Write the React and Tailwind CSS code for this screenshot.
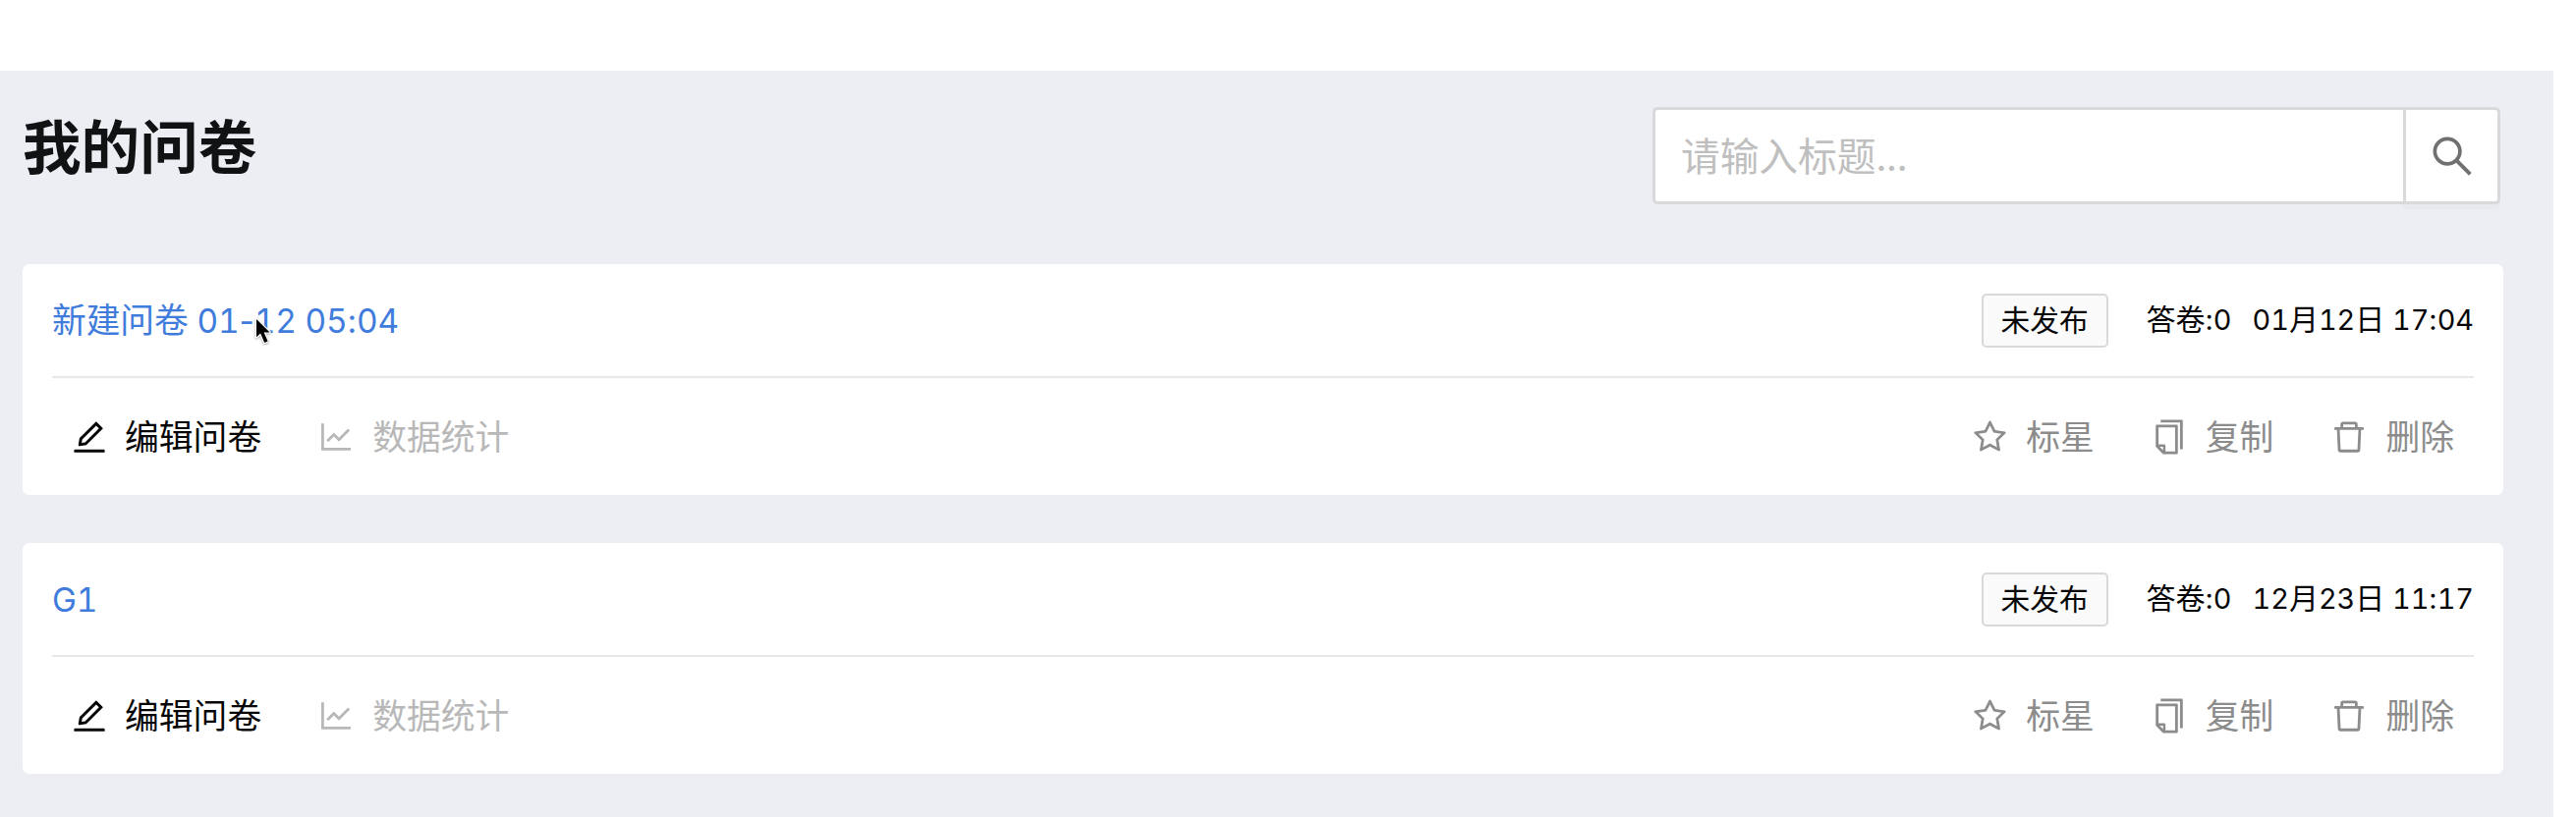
import React from 'react';
import {
  AiOutlineCopy,
  AiOutlineDelete,
  AiOutlineEdit,
  AiOutlineLineChart,
  AiOutlineSearch,
  AiOutlineStar,
} from 'react-icons/ai';

const surveys = [
  { id: 1, title: '新建问卷 01-12 05:04', status: '未发布', answers: 0, createdAt: '01月12日 17:04' },
  { id: 2, title: 'G1', status: '未发布', answers: 0, createdAt: '12月23日 11:17' },
];

// Latin runs are set slightly smaller than the Chinese text; digits keep a
// tabular width while separators keep their natural one.
function MixedText({ children }) {
  return children.split(/([\x20-\x7e]+)/).map((run, i) =>
    i % 2 ? (
      <span key={i} className="text-[0.96em]">
        {run.split(/([:-])/).map((part, j) =>
          j % 2 ? <span key={j} className="normal-nums">{part}</span> : part
        )}
      </span>
    ) : (
      run
    )
  );
}

function SurveyCard({ survey }) {
  return (
    <article className="flex h-[235px] w-[2525px] flex-col rounded-[7px] bg-white px-[30px]">
      <div className="flex h-[114px] items-center">
        <div className="flex-1">
          <a className="whitespace-pre text-[34.8px] leading-[50px] tracking-[-0.15px] text-[#3f7cdc]">
            <MixedText>{survey.title}</MixedText>
          </a>
        </div>
        <span className="mr-[39px] flex h-[55px] w-[129px] items-center justify-center rounded-[5px] border-2 border-[#d9d9d9] bg-[#fafafa] pt-px text-[29.7px] leading-none">
          {survey.status}
        </span>
        <span className="mr-[21px] whitespace-pre pb-px text-[30px] leading-none">
          <MixedText>{`答卷:${survey.answers}`}</MixedText>
        </span>
        <span className="whitespace-pre pb-px text-[30px] leading-none">
          <MixedText>{survey.createdAt}</MixedText>
        </span>
      </div>
      <div className="h-[2px] bg-[#e8e8e8]" />
      <div className="flex flex-1 items-center pt-px text-[34.8px] leading-none">
        <button className="ml-[18px] flex items-center gap-[16px]">
          <AiOutlineEdit className="size-[40px]" />
          编辑问卷
        </button>
        <button className="ml-[56px] flex items-center gap-[17px] text-[#b8b8b8]">
          <AiOutlineLineChart className="size-[40px]" />
          数据统计
        </button>
        <div className="ml-auto mr-[20px] flex items-center text-[#8c8c8c]">
          <button className="flex items-center gap-[17px]">
            <AiOutlineStar className="size-[39px]" />
            标星
          </button>
          <button className="ml-[56px] flex items-center gap-[17px]">
            <AiOutlineCopy className="size-[40px]" />
            复制
          </button>
          <button className="ml-[57px] flex items-center gap-[17px]">
            <AiOutlineDelete className="size-[40px]" />
            删除
          </button>
        </div>
      </div>
    </article>
  );
}

function Pointer() {
  return (
    <svg
      className="pointer-events-none absolute left-[257px] top-[321px] h-[34px] w-[24px] drop-shadow-[0_1px_1px_rgba(0,0,0,0.35)]"
      viewBox="-4 -4 24 34"
    >
      <path
        d="M0 0V18.2L4.1 14.6L8.2 24L11.6 22.5L7.6 13.4H13.6Z"
        fill="#000"
        stroke="#fff"
        strokeWidth="2.4"
        strokeLinejoin="round"
        paintOrder="stroke"
      />
    </svg>
  );
}

export default function App() {
  return (
    <div className="relative h-[832px] w-[2622px] overflow-hidden bg-white pt-[72px] font-['Inter','Noto_Sans_CJK_SC',sans-serif] text-[#050505] tabular-nums">
      <main className="h-[760px] w-[2599px] bg-[#edeef3] pl-[23px]">
        <header className="flex h-[197px] items-start pt-[37px]">
          <h1 className="mt-[11px] text-[59.6px] font-bold leading-[60px] text-[#111213]">我的问卷</h1>
          <div className="ml-auto mr-[54px] flex h-[99px] w-[863px]">
            <input
              className="w-[764px] rounded-l-[5px] border-[3px] border-r-0 border-[#d9d9dc] bg-white pl-[26px] pt-[4px] text-[39.7px] outline-none placeholder:text-[#bfbfbf]"
              placeholder="请输入标题..."
            />
            <button className="flex w-[99px] items-center justify-center rounded-r-[5px] border-[3px] border-[#d9d9dc] bg-white text-[#707070] shadow-[0_5px_0_rgba(0,0,0,0.02)]">
              <AiOutlineSearch className="size-[50px]" />
            </button>
          </div>
        </header>
        <div className="flex flex-col gap-[49px]">
          {surveys.map((survey) => (
            <SurveyCard key={survey.id} survey={survey} />
          ))}
        </div>
      </main>
      <Pointer />
    </div>
  );
}
